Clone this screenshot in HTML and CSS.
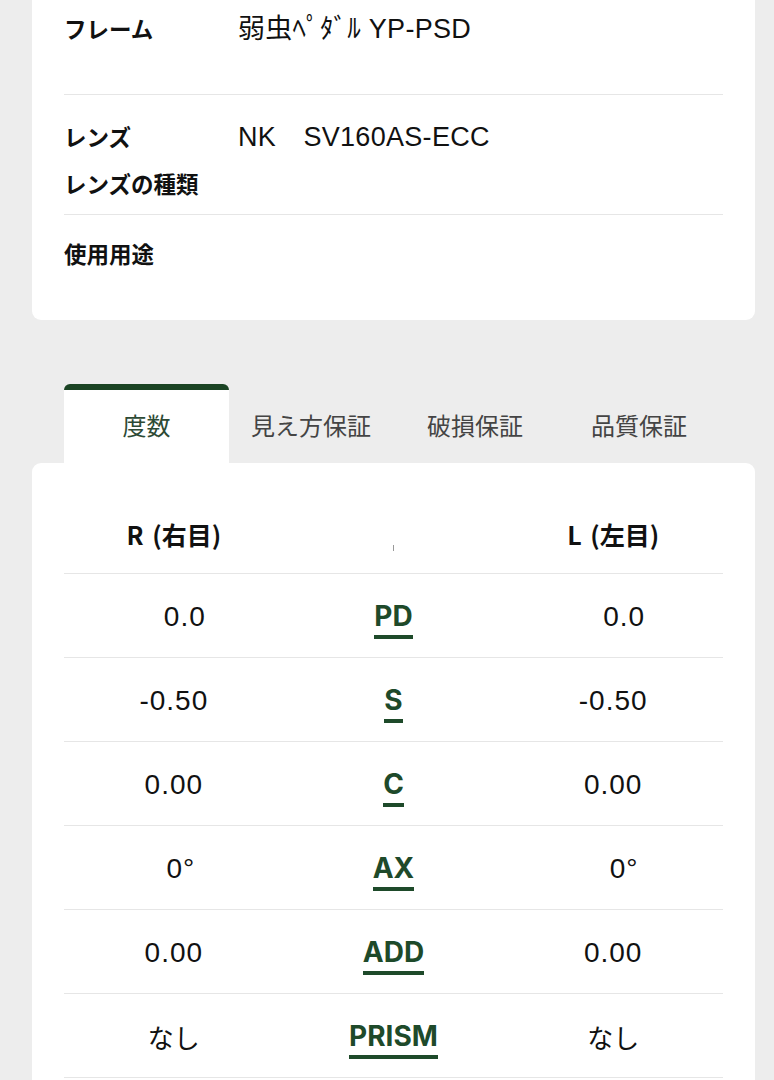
FILE: index.html
```html
<!DOCTYPE html>
<html lang="ja">
<head>
<meta charset="utf-8">
<title>度数</title>
<link rel="stylesheet" href="styles.css">
</head>
<body>
<main class="page">
  <section class="info-card">
    <div class="row row-first">
      <div class="line"><span class="label">フレーム</span><span class="value">弱虫ﾍﾟﾀﾞﾙ YP-PSD</span></div>
    </div>
    <div class="row">
      <div class="line"><span class="label">レンズ</span><span class="value">NK　SV160AS-ECC</span></div>
      <div class="line"><span class="label">レンズの種類</span><span class="value"></span></div>
    </div>
    <div class="row row-last">
      <div class="line"><span class="label">使用用途</span><span class="value"></span></div>
    </div>
  </section>

  <nav class="tabs">
    <div class="tab active">度数</div>
    <div class="tab">見え方保証</div>
    <div class="tab">破損保証</div>
    <div class="tab">品質保証</div>
  </nav>

  <section class="rx-card">
    <div class="rx-head">
      <div class="cell head">R (右目)</div>
      <div class="cell"><span class="tick"></span></div>
      <div class="cell head">L (左目)</div>
    </div>
    <div class="rx-row">
      <div class="cell num shift">0.0</div>
      <div class="cell"><span class="key">PD</span></div>
      <div class="cell num shift">0.0</div>
    </div>
    <div class="rx-row">
      <div class="cell num">-0.50</div>
      <div class="cell"><span class="key">S</span></div>
      <div class="cell num">-0.50</div>
    </div>
    <div class="rx-row">
      <div class="cell num">0.00</div>
      <div class="cell"><span class="key">C</span></div>
      <div class="cell num">0.00</div>
    </div>
    <div class="rx-row">
      <div class="cell num shift-sm">0°</div>
      <div class="cell"><span class="key">AX</span></div>
      <div class="cell num shift">0°</div>
    </div>
    <div class="rx-row">
      <div class="cell num">0.00</div>
      <div class="cell"><span class="key">ADD</span></div>
      <div class="cell num">0.00</div>
    </div>
    <div class="rx-row">
      <div class="cell jp">なし</div>
      <div class="cell"><span class="key">PRISM</span></div>
      <div class="cell jp">なし</div>
    </div>
  </section>
</main>
</body>
</html>
```

FILE: styles.css
```css
* { box-sizing: border-box; }

html, body {
  margin: 0;
  padding: 0;
  background: #ededed;
  color: #111;
  font-family: "Noto Sans CJK JP", "Liberation Sans", sans-serif;
}

.page {
  width: 774px;
  height: 1080px;
  overflow: hidden;
}

.info-card {
  margin: 0 19px 0 32px;
  padding: 0 32px;
  background: #fff;
  border-radius: 0 0 9px 9px;
}

.row {
  padding: 25px 0 15px;
  border-bottom: 1px solid #e6e6e6;
  display: flex;
  flex-direction: column;
  gap: 15px;
}

.row-first {
  padding-top: 12px;
  padding-bottom: 50px;
}

.row-last {
  border-bottom: none;
  padding-top: 22px;
  padding-bottom: 51px;
}

.line {
  display: flex;
  align-items: center;
  height: 32px;
}

.label {
  width: 174px;
  font-size: 22.5px;
  font-weight: 700;
  white-space: nowrap;
}

.value {
  font-family: "Liberation Sans", "Noto Sans CJK JP", sans-serif;
  font-size: 27px;
  letter-spacing: 0.3px;
  color: #111;
  white-space: pre;
  margin-top: -4px;
}

.tabs {
  display: flex;
  margin: 64px 19px 0 32px;
  padding-left: 32px;
}

.tab {
  width: 164px;
  height: 79px;
  display: flex;
  align-items: center;
  justify-content: center;
  font-size: 24px;
  color: #444;
  border-top: 6px solid transparent;
  padding-bottom: 5px;
}

.tab.active {
  width: 165px;
  background: #fff;
  border-top-color: #1b4424;
  border-radius: 6px 6px 0 0;
  color: #2d4a35;
}

.rx-card {
  margin: 0 19px 0 32px;
  padding: 0 32px 40px;
  background: #fff;
  border-radius: 9px 9px 0 0;
}

.rx-head,
.rx-row {
  display: grid;
  grid-template-columns: 1fr 1fr 1fr;
  border-bottom: 1px solid #e6e6e6;
}

.rx-head {
  height: 111px;
  padding-top: 55px;
  align-items: start;
}

.rx-row {
  height: 84px;
  align-items: center;
  padding-top: 2px;
}

.cell {
  display: flex;
  justify-content: center;
  align-items: center;
  height: 32px;
}

.head {
  font-size: 25px;
  font-weight: 700;
  word-spacing: 3px;
}

.tick {
  display: block;
  width: 1px;
  height: 6px;
  margin-top: 28px;
  background: #999;
}

.num {
  font-family: "Liberation Sans", sans-serif;
  font-size: 28px;
  letter-spacing: 1px;
}

.jp {
  font-size: 26px;
}

.shift { padding-left: 22px; }
.shift-sm { padding-left: 14px; }

.key {
  display: inline-block;
  font-family: "Inter", "Liberation Sans", sans-serif;
  font-weight: 700;
  font-size: 28px;
  line-height: 28px;
  color: #1e4a2a;
  padding-bottom: 5px;
  border-bottom: 4px solid #1e4a2a;
  margin-top: 8px;
}
```
